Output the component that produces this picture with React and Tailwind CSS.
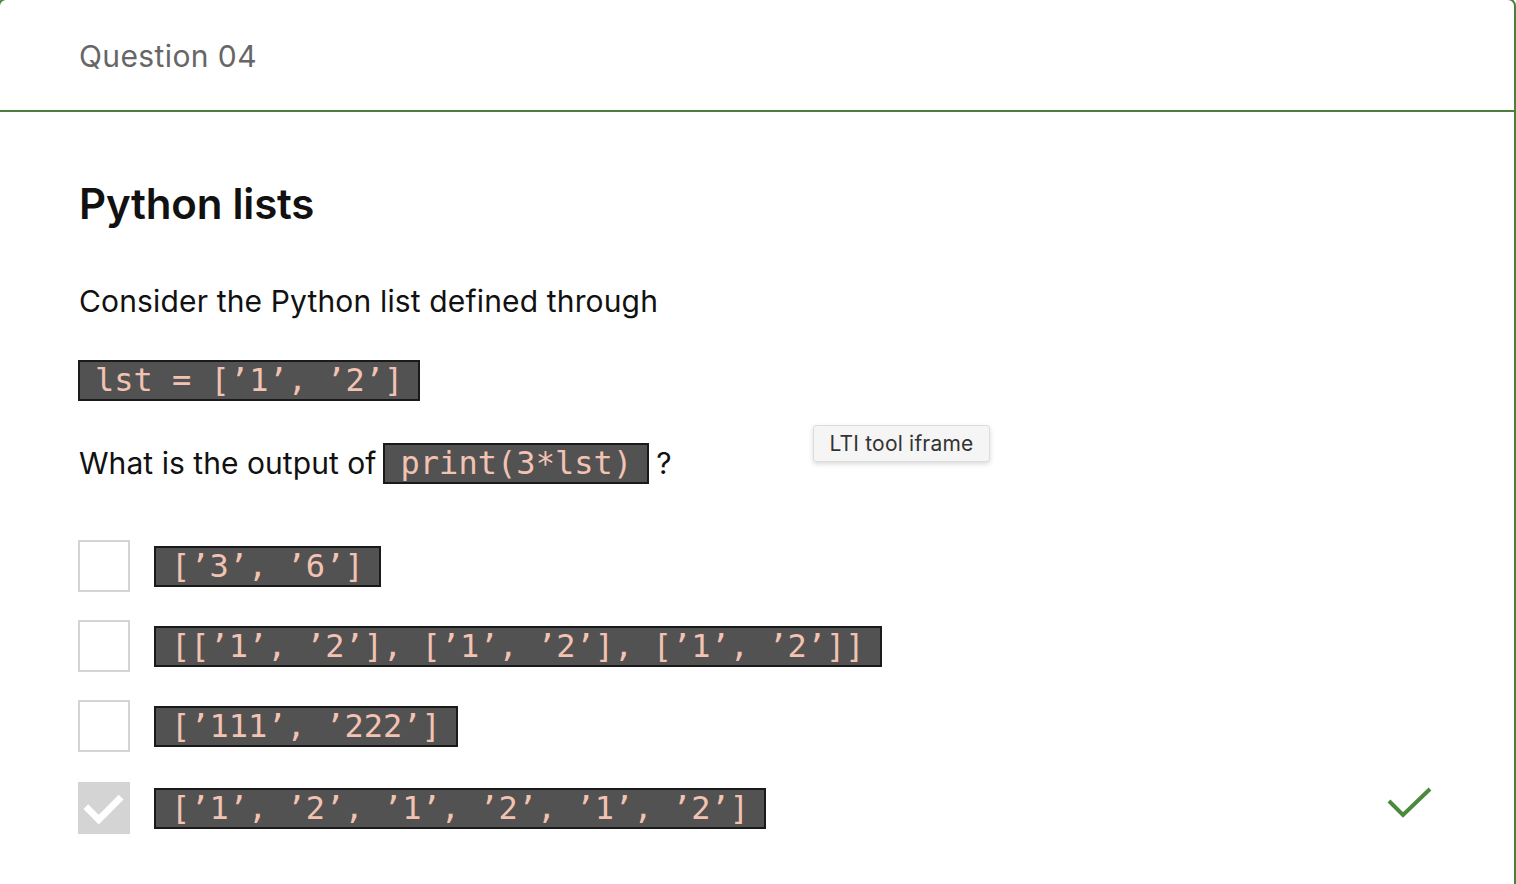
export default function App() {
  const code =
    "inline-block bg-[#525252] border-2 border-[#1a1a1a] text-[#f2c3b3] text-[32px] leading-[37px] px-[15px] whitespace-pre";
  const mono = { fontFamily: '"DejaVu Sans Mono", monospace' };
  const options = [
    { text: "['3', '6']", checked: false },
    { text: "[['1', '2'], ['1', '2'], ['1', '2']]", checked: false },
    { text: "['111', '222']", checked: false },
    { text: "['1', '2', '1', '2', '1', '2']", checked: true },
  ];
  const q = (s) => s.replace(/'/g, "\u2019");
  return (
    <div className="w-[1516px] h-[884px] overflow-hidden bg-white" style={{ fontFamily: 'Inter, "Noto Sans", sans-serif' }}>
      <div className="relative -mt-[2px] -ml-[2px] w-[1518px] h-[1000px] border-2 border-[#4b7f3b] rounded-t-[8px]">
        <div className="h-[112px] border-b-2 border-[#4b7f3b] pl-[79px] flex items-center">
          <span className="text-[30px] text-[#666666] tracking-[0.4px] mt-[2px]">Question 04</span>
        </div>
        <div className="pl-[79px] pr-[80px] flex flex-col">
          <h1 className="mt-[67px] text-[42px] font-semibold text-[#111111] leading-[50px] tracking-[-0.2px]">Python lists</h1>
          <p className="mt-[52px] text-[30px] text-[#111111] leading-[40px] tracking-[0.15px]">Consider the Python list defined through</p>
          <div className="mt-[39px] -ml-[1px]">
            <span className={code} style={mono}>{q("lst = ['1', '2']")}</span>
          </div>
          <div className="mt-[40px] flex items-center text-[30px] text-[#111111] tracking-[0.05px]">
            <span>What is the output of</span>
            <span className={code + " ml-[7px]"} style={mono}>print(3*lst)</span>
            <span className="ml-[7px]">?</span>
          </div>
          <div className="mt-[54px] -ml-[1px] flex flex-col gap-[28px]">
            {options.map((o, i) => (
              <div key={i} className={"flex items-center h-[52px] relative" + (o.checked ? " mt-[2px]" : "")}>
                {o.checked ? (
                  <div className="w-[52px] h-[52px] bg-[#d4d4d4] flex items-center justify-center">
                    <svg width="42" height="42" viewBox="0 0 40 40">
                      <path d="M5 21 L15 31 L34 12" fill="none" stroke="white" strokeWidth="6.5" strokeLinecap="square" />
                    </svg>
                  </div>
                ) : (
                  <div className="w-[52px] h-[52px] border-2 border-[#d4d4d4] bg-white" />
                )}
                <span className={code + " ml-[24px]"} style={mono}>{q(o.text)}</span>
                {o.checked && (
                  <svg className="absolute left-[1309px] top-[5px]" width="46" height="34" viewBox="0 0 46 34">
                    <path d="M2 14 L16 28 L43 2" fill="none" stroke="#4b8a3c" strokeWidth="4" />
                  </svg>
                )}
              </div>
            ))}
          </div>
        </div>
        <div className="absolute left-[813px] top-[425px] h-[37px] w-[177px] flex items-center justify-center bg-[#f5f5f5] border border-[#dddddd] rounded-[3px] shadow-[0_2px_5px_rgba(0,0,0,0.15)] text-[21px] text-[#333333] tracking-[0.2px]">
          LTI tool iframe
        </div>
      </div>
    </div>
  );
}
